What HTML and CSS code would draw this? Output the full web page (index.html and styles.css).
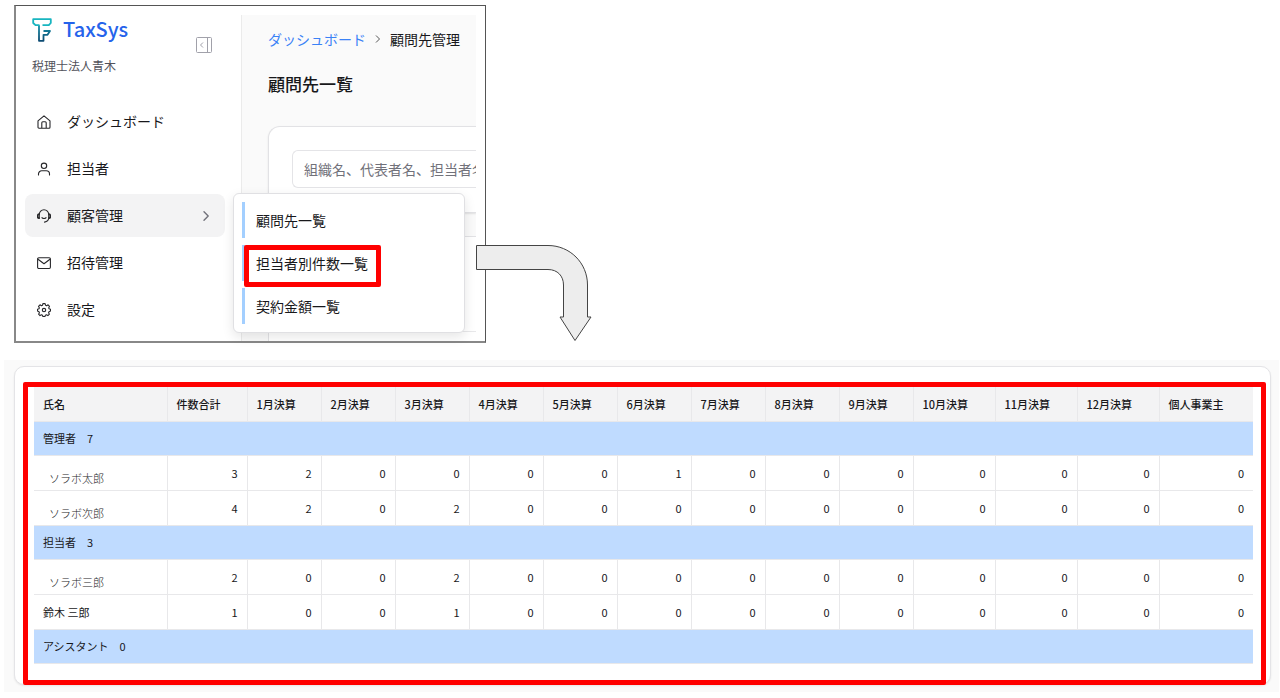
FILE: index.html
```html
<!DOCTYPE html>
<html lang="ja">
<head>
  <meta charset="UTF-8">
  <meta name="viewport" content="width=device-width, initial-scale=1.0">
  <title>TaxSys 担当者別件数一覧</title>
  <link rel="stylesheet" href="styles.css">
</head>
<body>
  <div class="menu-guide">
    <div class="window">
      <aside class="sidebar">
        <div class="brand">
          <div class="brand-text">
            <a class="logo" href="#">
              <svg width="20" height="24" viewBox="0 0 20 24" fill="none" stroke-width="1.800" stroke-linejoin="round">
                <defs>
                  <linearGradient id="stem" x1="0" y1="0" x2="0" y2="1">
                    <stop offset="0" stop-color="#1690a8"/>
                    <stop offset="1" stop-color="#0c4a72"/>
                  </linearGradient>
                </defs>
                <path stroke="url(#stem)" d="M7 7.200v15.600h4.500v-6h4l2.500-3.800h-6.500"/>
                <path stroke="#18b5c0" d="M7.500 7.200H3.500L1.200 5V1.200h17.600V5l-2 2.200H10.500"/>
              </svg>
              <span>TaxSys</span>
            </a>
            <p class="office">税理士法人青木</p>
          </div>
          <button class="collapse" type="button" aria-label="メニューを閉じる">
            <svg width="16" height="16" viewBox="0 0 16 16" fill="none" stroke="currentColor">
              <rect x="0.500" y="0.500" width="15" height="15" rx="1"/>
              <path d="M11.500 0.500v15M7 5.500L4.500 8 7 10.500"/>
            </svg>
          </button>
        </div>

        <nav class="nav">
          <div class="nav-item">
            <a href="#">
              <svg class="icon" viewBox="0 0 14 14"><path d="M1 5.800L7 .8l6 5v6.400a1 1 0 0 1-1 1H2a1 1 0 0 1-1-1zM4.800 13V7.800a1 1 0 0 1 1-1h2.400a1 1 0 0 1 1 1V13"/></svg>
              <span>ダッシュボード</span>
            </a>
          </div>
          <div class="nav-item">
            <a href="#">
              <svg class="icon" viewBox="0 0 14 14"><circle cx="7" cy="3.800" r="2.700"/><path d="M1.500 13V12a3.200 3.200 0 0 1 3.200-3.200h4.600a3.200 3.200 0 0 1 3.200 3.200v1"/></svg>
              <span>担当者</span>
            </a>
          </div>
          <div class="nav-item active">
            <a href="#">
              <svg class="icon" viewBox="0 0 14 14"><path d="M2.300 9.300V5.500a4.700 4.700 0 0 1 9.400 0v3.300c0 2.300-1.400 3.800-4.200 4.300M5 8.700c1.200.9 2.800.9 4 0"/><path class="thick" d="M2 5.200C.2 5.400.2 8.900 2 9.100M12 5.200c1.800.2 1.800 3.700 0 3.900"/></svg>
              <span>顧客管理</span>
              <svg class="icon chevron" viewBox="0 0 14 14"><path d="M5 2.800L9.200 7 5 11.200"/></svg>
            </a>
            <div class="submenu">
              <a href="#">顧問先一覧</a>
              <a class="marked" href="#">担当者別件数一覧</a>
              <a href="#">契約金額一覧</a>
            </div>
          </div>
          <div class="nav-item">
            <a href="#">
              <svg class="icon" viewBox="0 0 14 14"><rect x=".6" y="1.700" width="12.800" height="10.800" rx="1.200"/><path d="M1 3.200l6 4.600 6-4.600"/></svg>
              <span>招待管理</span>
            </a>
          </div>
          <div class="nav-item">
            <a href="#">
              <svg class="icon" viewBox="0 0 14 14"><path d="M5.900.6h2.200l.5 1.700 1 .4 1.500-.9 1.400 1.500-.8 1.600.4.900 1.400.4v1.900l-1.500.6-.4 1 .8 1.500-1.500 1.400-1.500-.8-1 .4-.5 1.400H5.900l-.4-1.400-1-.4-1.500.8-1.400-1.400.8-1.500-.4-1-1.500-.6V6.200l1.500-.4.4-.9-.9-1.600 1.500-1.500 1.500.9 1-.4z"/><circle cx="7" cy="7.100" r="1.700"/></svg>
              <span>設定</span>
            </a>
          </div>
        </nav>
      </aside>

      <main class="content">
        <div class="breadcrumb">
          <a href="#">ダッシュボード</a>
          <svg width="6" height="10" viewBox="0 0 6 10" fill="none" stroke="#555"><path d="M1 1.500L4.500 5 1 8.500"/></svg>
          <span>顧問先管理</span>
        </div>
        <h1>顧問先一覧</h1>
        <div class="panel search">
          <input type="text" aria-label="検索" placeholder="組織名、代表者名、担当者名">
        </div>
        <div class="panel list">
          <div class="list-row"></div>
        </div>
      </main>
    </div>

    <svg class="arrow" width="118" height="98" viewBox="0 0 118 98">
      <path d="M1.500 1.500H73C95 1.500 112.500 19 112.500 41v32h3.500L100 96.500 85 73h3.500V41c0-9-6-15.500-15.500-15.500H1.500z" fill="#ededed" stroke="#444"/>
    </svg>
  </div>

  <section class="summary">
    <div class="summary-card">
      <table>
        <colgroup>
          <col class="col-name">
          <col class="col-total">
          <col class="col-month" span="9">
          <col class="col-wide" span="3">
          <col class="col-person">
        </colgroup>
        <thead>
          <tr>
            <th>氏名</th><th>件数合計</th><th>1月決算</th><th>2月決算</th><th>3月決算</th><th>4月決算</th><th>5月決算</th><th>6月決算</th><th>7月決算</th><th>8月決算</th><th>9月決算</th><th>10月決算</th><th>11月決算</th><th>12月決算</th><th>個人事業主</th>
          </tr>
        </thead>
        <tbody>
          <tr class="group"><td colspan="15">管理者　7</td></tr>
          <tr>
            <td class="name replaced">ソラボ太郎</td><td>3</td><td>2</td><td>0</td><td>0</td><td>0</td><td>0</td><td>1</td><td>0</td><td>0</td><td>0</td><td>0</td><td>0</td><td>0</td><td>0</td>
          </tr>
          <tr>
            <td class="name replaced">ソラボ次郎</td><td>4</td><td>2</td><td>0</td><td>2</td><td>0</td><td>0</td><td>0</td><td>0</td><td>0</td><td>0</td><td>0</td><td>0</td><td>0</td><td>0</td>
          </tr>
          <tr class="group"><td colspan="15">担当者　3</td></tr>
          <tr>
            <td class="name replaced">ソラボ三郎</td><td>2</td><td>0</td><td>0</td><td>2</td><td>0</td><td>0</td><td>0</td><td>0</td><td>0</td><td>0</td><td>0</td><td>0</td><td>0</td><td>0</td>
          </tr>
          <tr>
            <td class="name">鈴木 三郎</td><td>1</td><td>0</td><td>0</td><td>1</td><td>0</td><td>0</td><td>0</td><td>0</td><td>0</td><td>0</td><td>0</td><td>0</td><td>0</td><td>0</td>
          </tr>
          <tr class="group"><td colspan="15">アシスタント　0</td></tr>
        </tbody>
      </table>
      <div class="frame"></div>
    </div>
  </section>
</body>
</html>
```

FILE: styles.css
```css
* {
  box-sizing: border-box;
}

body {
  margin: 0;
  padding: 5px 1px 7px 4px;
  background: #fff;
  color: #18181b;
  font-family: "Noto Sans CJK JP", sans-serif;
  font-size: 14px;
  line-height: 20px;
}

a {
  color: inherit;
  text-decoration: none;
}

p, h1 {
  margin: 0;
}

/* menu window */
.menu-guide {
  position: relative;
  padding-left: 10px;
}

.window {
  display: flex;
  max-width: 472px;
  border: 1px solid #555;
  border-left: 2px solid #888;
  border-bottom: 2px solid #888;
}

.sidebar {
  flex: 0 0 225px;
  padding: 10px 16px 9px 9px;
}

.brand {
  display: flex;
  justify-content: space-between;
  padding: 0 13px 0 7px;
  margin-bottom: 24px;
}

.logo {
  display: flex;
  align-items: center;
  gap: 11px;
  height: 28px;
  color: #2563eb;
  font-size: 20px;
  font-weight: 500;
}

.logo span {
  padding-bottom: 2px;
}

.office {
  margin-top: 12px;
  color: #52525b;
  font-size: 12px;
}

.collapse {
  align-self: flex-start;
  display: flex;
  margin-top: 21px;
  padding: 0;
  border: 0;
  background: none;
  color: #a1a1aa;
}

.nav {
  display: flex;
  flex-direction: column;
  gap: 4px;
}

.nav-item {
  position: relative;
}

.nav-item > a {
  display: flex;
  align-items: center;
  gap: 16px;
  height: 43px;
  padding: 0 12px;
  border-radius: 8px;
}

.nav-item span {
  padding-bottom: 2px;
}

.nav-item.active > a {
  background: #f3f3f4;
}

.icon {
  flex: none;
  width: 14px;
  height: 14px;
  fill: none;
  stroke: #27272a;
  stroke-width: 1.1;
  stroke-linecap: round;
  stroke-linejoin: round;
}

.icon .thick {
  stroke-width: 1.8;
}

.chevron {
  margin-left: auto;
  stroke: #71717a;
  stroke-width: 1.4;
}

.submenu {
  position: absolute;
  top: -1px;
  left: 208px;
  z-index: 2;
  display: flex;
  flex-direction: column;
  gap: 7px;
  width: 232px;
  padding: 8px;
  border: 1px solid #e0e0e3;
  border-radius: 6px;
  background: #fff;
  box-shadow: 0 4px 12px rgba(0, 0, 0, 0.1);
}

.submenu a {
  position: relative;
  padding: 8px 11px;
  border-left: 3px solid #a3cfff;
}

.submenu .marked::after {
  content: "";
  position: absolute;
  inset: 0 75px -6px -1px;
  border: 5px solid #f00;
  border-radius: 2px;
}

.content {
  flex: 1;
  min-width: 0;
  margin: 9px 9px 0 0;
  padding: 14px 0 0 26px;
  border-left: 1px solid #ebebeb;
  background: #fafafa;
  overflow: hidden;
}

.breadcrumb {
  display: flex;
  align-items: center;
  gap: 9px;
  white-space: nowrap;
}

.breadcrumb a {
  color: #3b82f6;
}

h1 {
  margin: 23px 0 30px;
  font-size: 17px;
  font-weight: 500;
  line-height: 24px;
}

.panel {
  border: 1px solid #e2e2e5;
  border-right: 0;
  background: #fff;
}

.search {
  padding: 23px 0 24px 23px;
  border-radius: 12px 0 0 12px;
  box-shadow: 0 1px 2px rgba(0, 0, 0, 0.1);
}

.search input {
  display: block;
  width: 100%;
  height: 38px;
  padding: 0 0 0 11px;
  border: 1px solid #e4e4e7;
  border-right: 0;
  border-radius: 6px 0 0 6px;
  font: inherit;
}

.search input::placeholder {
  color: #71717a;
}

.list {
  height: 105px;
  margin-top: 23px;
  border-bottom: 0;
}

.list-row {
  height: 95px;
  border-bottom: 1px solid #e8e8ea;
}

.arrow {
  position: absolute;
  top: 239px;
  left: 471px;
  z-index: 3;
}

/* result table */
.summary {
  margin-top: 17px;
  padding: 6px 8px 7px 10px;
  background: #fafafa;
}

.summary-card {
  position: relative;
  padding: 20px 19px 20px 19px;
  border: 1px solid #e4e4e7;
  border-radius: 10px;
  background: #fff;
  box-shadow: 0 1px 2px rgba(0, 0, 0, 0.08);
}

.frame {
  position: absolute;
  inset: 15px 4px -1px 8px;
  border: 5px solid #f00;
  border-radius: 2px;
  pointer-events: none;
}

table {
  width: 100%;
  border-collapse: collapse;
  table-layout: fixed;
  font-size: 11px;
  line-height: 16px;
}

.col-name {
  width: 133px;
}

.col-total {
  width: 80px;
}

.col-month {
  width: 74px;
}

.col-wide {
  width: 82px;
}

.col-person {
  width: 94px;
}

th, td {
  height: 35px;
  padding: 0 9px;
  border-bottom: 1px solid #e8e8ea;
  border-left: 1px solid #e8e8ea;
  text-align: right;
  white-space: nowrap;
}

th:first-child,
td:first-child {
  border-left: 0;
  text-align: left;
}

th {
  height: 34px;
  background: #f3f3f4;
  font-weight: 500;
  text-align: left;
}

.group td {
  height: 34px;
  background: #bfdbff;
}

.name.replaced {
  padding: 10px 0 0 15px;
  color: #27272a;
  font-weight: 300;
}
```
